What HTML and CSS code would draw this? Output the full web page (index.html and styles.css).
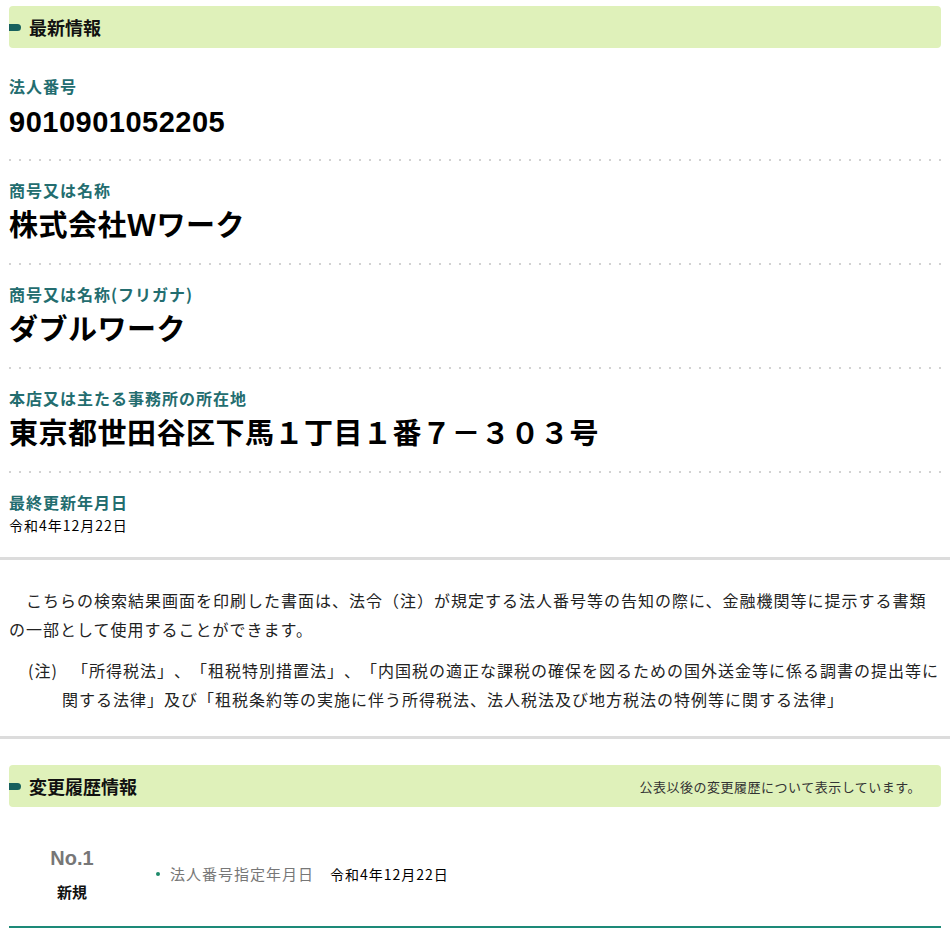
FILE: index.html
```html
<!DOCTYPE html>
<html lang="ja">

<head>
	<meta charset="utf-8">
	<title>法人番号 検索結果</title>
	<link rel="stylesheet" href="styles.css">
</head>

<body>

	<!-- 最新情報 -->
	<div class="block">
		<h2 class="bar">
			<span class="bar-title">最新情報</span>
		</h2>

		<dl class="info">
			<div class="item">
				<dt class="item-label">法人番号</dt>
				<dd class="item-value">9010901052205</dd>
			</div>
			<div class="item">
				<dt class="item-label">商号又は名称</dt>
				<dd class="item-value">株式会社Ｗワーク</dd>
			</div>
			<div class="item">
				<dt class="item-label">商号又は名称(フリガナ)</dt>
				<dd class="item-value">ダブルワーク</dd>
			</div>
			<div class="item">
				<dt class="item-label">本店又は主たる事務所の所在地</dt>
				<dd class="item-value">東京都世田谷区下馬１丁目１番７－３０３号</dd>
			</div>
			<div class="item item-last">
				<dt class="item-label">最終更新年月日</dt>
				<dd class="item-date">令和4年12月22日</dd>
			</div>
		</dl>
	</div>

	<div class="rule"></div>

	<!-- 注意書き -->
	<div class="notice">
		<p class="notice-text">　こちらの検索結果画面を印刷した書面は、法令（注）が規定する法人番号等の告知の際に、金融機関等に提示する書類の一部として使用することができます。</p>
		<p class="notice-note"><span class="note-mark">(注)</span>「所得税法」、「租税特別措置法」、「内国税の適正な課税の確保を図るための国外送金等に係る調書の提出等に関する法律」及び「租税条約等の実施に伴う所得税法、法人税法及び地方税法の特例等に関する法律」</p>
	</div>

	<div class="rule"></div>

	<!-- 変更履歴情報 -->
	<div class="block block-history">
		<h2 class="bar">
			<span class="bar-title">変更履歴情報</span>
			<span class="bar-note">公表以後の変更履歴について表示しています。</span>
		</h2>

		<div class="history">
			<div class="history-no">
				<div class="history-num">No.1</div>
				<div class="history-kind">新規</div>
			</div>
			<ul class="history-detail">
				<li class="history-line">
					<span class="history-label">法人番号指定年月日</span>
					<span class="history-date">令和4年12月22日</span>
				</li>
			</ul>
		</div>
	</div>

</body>

</html>
```

FILE: styles.css
```css
body {
	margin: 0;
	font-family: "Noto Sans CJK JP", sans-serif;
	background-color: #fff;
	color: #222;
	text-spacing-trim: space-all;
}

h2,
dl,
dd,
p,
ul {
	margin: 0;
	padding: 0;
}

.block {
	padding: 6px 9px 0;
}

.block-history {
	padding-top: 26px;
}

/* green heading bar */
.bar {
	display: flex;
	align-items: center;
	height: 42px;
	padding-right: 20px;
	background-color: #dff1ba;
	border-radius: 4px;
	font-weight: normal;
}

.bar::before {
	content: "";
	display: block;
	width: 12px;
	height: 7px;
	margin-right: 8px;
	background-color: #17605d;
	border-radius: 0 4px 4px 0;
}

.bar-title {
	font-size: 18px;
	font-weight: bold;
	color: #111;
	line-height: 24px;
}

.bar-note {
	margin-left: auto;
	font-size: 13px;
	letter-spacing: 0.5px;
	color: #333;
}

/* latest information */
.info {
	margin-top: 9px;
}

.item {
	padding: 17px 0 15px;
	background-image: linear-gradient(to right, #d2d2d2 2px, transparent 2px);
	background-size: 10px 2px;
	background-repeat: repeat-x;
	background-position: 0 100%;
}

.item-last {
	padding-bottom: 21px;
	background-image: none;
}

.item-label {
	font-size: 16px;
	line-height: 24px;
	font-weight: bold;
	letter-spacing: 1px;
	color: #236d6f;
}

.item-value {
	font-family: "Liberation Sans", "Noto Sans CJK JP", sans-serif;
	font-size: 29px;
	line-height: 48px;
	font-weight: bold;
	letter-spacing: 0.5px;
	color: #000;
}

.item-date {
	font-size: 14px;
	line-height: 22px;
	letter-spacing: 1px;
	color: #000;
}

.rule {
	height: 3px;
	background-color: #dcdcdc;
}

/* notice text */
.notice {
	padding: 26px 9px 22px;
	font-size: 16px;
	line-height: 29px;
	letter-spacing: 1px;
	color: #222;
}

.notice-note {
	margin-top: 12px;
	padding-left: 53px;
	text-indent: -34px;
}

.note-mark {
	display: inline-block;
	width: 44px;
	text-indent: 0;
}

/* change history */
.history {
	display: flex;
	align-items: center;
	padding: 37px 0 22px;
	border-bottom: 2px solid #1d8a78;
}

.history-no {
	width: 126px;
	text-align: center;
}

.history-num {
	font-family: "Liberation Sans", sans-serif;
	font-size: 20px;
	line-height: 28px;
	font-weight: bold;
	color: #777;
}

.history-kind {
	margin-top: 8px;
	font-size: 15px;
	line-height: 24px;
	font-weight: bold;
	color: #111;
}

.history-detail {
	list-style: none;
	padding-left: 21px;
}

.history-line {
	display: flex;
	align-items: center;
	font-size: 14px;
	line-height: 22px;
}

.history-line::before {
	content: "";
	width: 4px;
	height: 4px;
	margin-right: 10px;
	border-radius: 50%;
	background-color: #1d8a6a;
}

.history-label {
	font-size: 15px;
	letter-spacing: 1px;
	color: #777;
}

.history-date {
	margin-left: 16px;
	letter-spacing: 1px;
	color: #000;
}
```
